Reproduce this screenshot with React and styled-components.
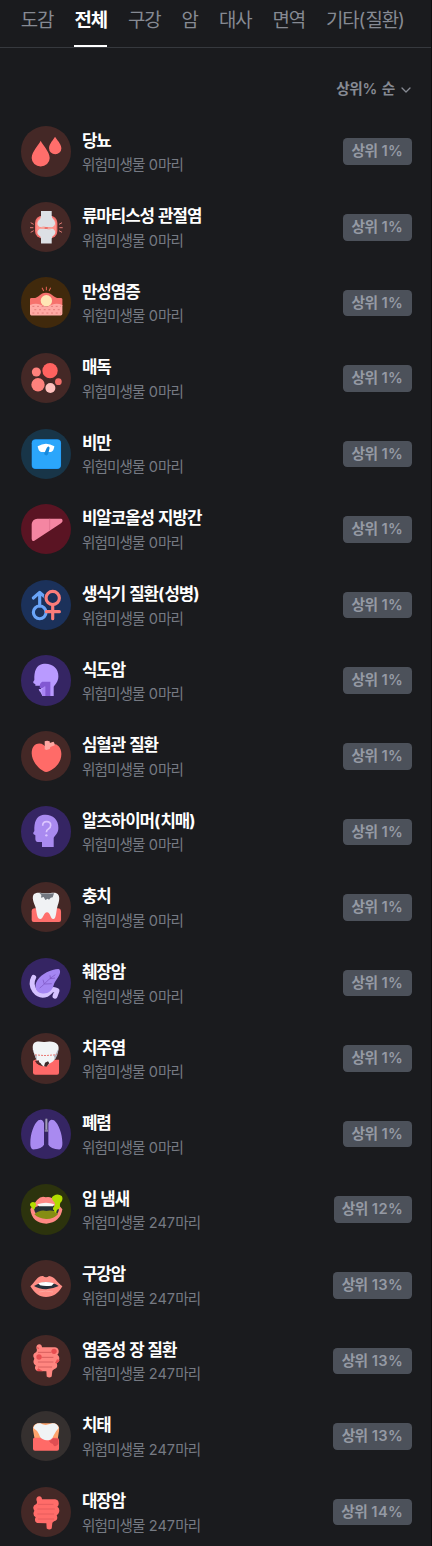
import React from "react";
import styled, { createGlobalStyle, css } from "styled-components";

const GlobalStyle = createGlobalStyle`
  *, *::before, *::after { box-sizing: border-box; }
  body {
    margin: 0;
    background: #1a1b1e;
    font-family: Inter, "Noto Sans CJK KR", sans-serif;
    -webkit-font-smoothing: antialiased;
  }
`;

const Page = styled.div`
  width: 432px;
  height: 1546px;
  overflow: hidden;
  background: #1a1b1e;
  border-right: 1px solid #0e0e10;
`;

const TabBar = styled.nav`
  display: flex;
  gap: 21.1px;
  height: 48px;
  padding-left: 20.8px;
  border-bottom: 1px solid #36393e;
`;

const Tab = styled.div`
  height: 47px;
  padding-top: 7px;
  font-size: 18.9px;
  line-height: 28px;
  white-space: nowrap;
  color: #868a93;
  ${(p) =>
    p.$active &&
    css`
      color: #fff;
      font-weight: 700;
      border-bottom: 2px solid #fff;
    `}
`;

const SortBar = styled.div`
  display: flex;
  justify-content: flex-end;
  padding: 30px 19px 0 0;
  height: 78.2px;
`;

const Hangul = styled.span`
  letter-spacing: -0.06em;
`;

const SortButton = styled.div`
  display: flex;
  align-items: center;
  gap: 5px;
  height: 23px;
  font-size: 14.7px;
  font-weight: 600;
  letter-spacing: 0.03em;
  line-height: 23px;
  color: #868a93;
  ${Hangul} { letter-spacing: -0.025em; }
`;

const List = styled.div`
  display: flex;
  flex-direction: column;
  gap: 25.2px;
  padding: 0 19.5px 0 21px;
`;

const Row = styled.div`
  display: flex;
  align-items: center;
  height: 50.4px;
  flex-shrink: 0;
`;

const Avatar = styled.div`
  width: 50.4px;
  height: 50.4px;
  border-radius: 50%;
  overflow: hidden;
  background: ${(p) => p.$tone};
  svg { display: block; width: 100%; height: 100%; }
`;

const Info = styled.div`
  flex: 1;
  padding: 2px 0 0 10.5px;
`;

const Name = styled.div`
  font-size: 16.8px;
  font-weight: 700;
  line-height: 25.2px;
  color: #fff;
`;

const Sub = styled.div`
  margin-top: 0.4px;
  font-size: 14.6px;
  line-height: 22px;
  color: #767a83;
`;

const Badge = styled.div`
  height: 26.6px;
  margin-top: 0.6px;
  padding: 0 8.2px;
  border-radius: 4.2px;
  background: #4c515a;
  color: #959aa4;
  font-size: 14.7px;
  font-weight: 600;
  letter-spacing: 0.03em;
  line-height: 27px;
  white-space: nowrap;
  ${Hangul} { letter-spacing: -0.04em; }
`;

/* Hangul is tracked tighter than digits and punctuation. */
const Text = ({ children }) =>
  children
    .split(/([가-힣]+)/)
    .filter(Boolean)
    .map((run, i) => (/[가-힣]/.test(run) ? <Hangul key={i}>{run}</Hangul> : run));

const HEAD =
  "M64 27 C90 22 113 38 112 66 C112 80 103 88 98 95 L98 123 L63 123 L63 108 L50 108 Q43 107 43 98 L43 88 L37 84 Q35 81 40 75 C39 48 46 31 64 27 Z";
const GUT =
  "M46 39 Q46 28 55 28 Q62 28 63 37 L102 37 Q114 39 113 51 Q113 56 109 59 Q117 64 114 76 Q112 82 107 85 Q113 98 99 103 L94 107 L92 124 Q85 130 77 124 L76 109 L48 108 Q38 102 44 91 Q33 84 40 71 Q31 57 46 51 Q50 46 46 39 Z";

const icons = {
  drops: (
    <g fill="#ff6e6b">
      <path d="M59 44 C55 55 32 76 32 96 A27 25 0 0 0 86 96 C86 76 63 55 59 44Z" />
      <path d="M102 32 C98 40 84 53 84 67 A18.5 18 0 0 0 121 67 C121 53 106 40 102 32Z" />
    </g>
  ),
  joint: (
    <>
      <rect x="42" y="41" width="67" height="68" rx="22" fill="#f4706d" />
      <rect x="46" y="45" width="59" height="60" rx="20" fill="#ff918a" />
      <path d="M29 62l9 5M27 77h10M29 91l9-5M123 62l-9 5M125 77h-10M123 91l-9-5" stroke="#ed817a" strokeWidth="2.8" />
      <path d="M60 27H92V41Q92 49 100 56Q106 68 95 75H56Q45 68 52 56Q60 50 60 41Z" fill="#dde0e5" />
      <path d="M56 80H96Q107 88 100 98Q92 102 92 110V124H60V110Q60 102 52 98Q45 88 56 80Z" fill="#dde0e5" />
      <path d="M60 78q8-4 16 0t17-1" fill="none" stroke="#f5a69d" strokeWidth="5" />
      <path d="M71 78h9" stroke="#e4615d" strokeWidth="4" />
    </>
  ),
  inflammation: (
    <>
      <path d="M27 66Q27 62 34 63C54 65 55 47 75 47S97 65 117 63Q124 62 124 67V87H27Z" fill="#f6716c" />
      <path d="M27 84Q43 77 59 83Q75 93 92 83Q108 77 124 84V110Q124 115 119 115H31Q27 115 27 110Z" fill="#ffaaa5" />
      <path d="M34 88h86M40 98h77M34 108h86" stroke="#df7775" strokeWidth="2.6" strokeDasharray="6 8" />
      <circle cx="76" cy="71" r="17" fill="#ffe6b5" />
      <path d="M63 32l5 10M76 29v11M89 32l-5 10" stroke="#e96356" strokeWidth="3" />
    </>
  ),
  cells: (
    <>
      <circle cx="87" cy="53" r="23" fill="#ff625f" />
      <circle cx="46" cy="57" r="13.5" fill="#ff817c" />
      <circle cx="51" cy="95" r="20" fill="#ff817c" />
      <circle cx="88" cy="105" r="15" fill="#ffc0bd" />
      <circle cx="112" cy="86" r="10" fill="#f16d69" />
    </>
  ),
  scale: (
    <>
      <rect x="32" y="31" width="88" height="89" rx="12" fill="#1c8ff0" />
      <rect x="33" y="32" width="86" height="86" rx="11" fill="#2ba6fb" />
      <path d="M50 52Q75 36 100 52Q98 67 90 69H60Q52 67 50 52Z" fill="#fff" />
      <path d="M69 75L77 57Q80 51 84 53Q87 55 85 61L81 76Q76 83 69 75Z" fill="#1689dc" />
    </>
  ),
  liver: (
    <>
      <path d="M32 60Q34 45 49 44H120Q126 45 124 53Q121 58 113 62L40 110Q32 113 32 104Z" fill="#f486a2" />
      <path d="M86 44V79" stroke="#d66a87" strokeWidth="2" />
    </>
  ),
  genders: (
    <>
      <g fill="none" stroke="#6aa4f8" strokeWidth="9.5">
        <circle cx="56" cy="97" r="19" />
        <path d="M56 78V39M37 54L56 37L75 54" strokeLinecap="round" strokeLinejoin="round" />
      </g>
      <circle cx="95" cy="54" r="20" fill="none" stroke="#1b315a" strokeWidth="14" />
      <g fill="none" stroke="#fb7d7a" strokeWidth="9.5" strokeLinecap="round">
        <circle cx="95" cy="54" r="20" />
        <path d="M95 75V116M76 95H115" />
      </g>
    </>
  ),
  throat: (
    <>
      <path d="M64 27C90 22 113 38 112 64C112 80 103 88 98 95L98 123H64L58 111Q54 109 53 102H60V92H43V88L37 84Q35 81 40 75C39 48 46 31 64 27Z" fill="#b99aff" />
      <path d="M57 87L63 80H88V123H72V94Q62 103 56 98Z" fill="#8258d2" />
      <path d="M62 104L73 94V123H64Z" fill="#a985f5" />
    </>
  ),
  heart: (
    <>
      <path d="M77 54C69 31 32 30 32 67C33 98 62 120 75 123C94 120 121 99 121 69C121 34 86 30 77 54Z" fill="#ff6b68" />
      <path d="M71 55V31Q79 27 87 32L86 36L97 32Q101 34 101 43L88 48L86 54L76 57Z" fill="#ffa7a2" />
    </>
  ),
  mind: (
    <>
      <path d={HEAD} fill="#a98af0" />
      <path d="M65 59Q65 47 77 47Q89 47 89 58Q89 65 82 69Q76 72 76 79" fill="none" stroke="#dbc5ff" strokeWidth="5" />
      <circle cx="76" cy="88" r="3.5" fill="#dbc5ff" />
    </>
  ),
  cavity: (
    <>
      <path d="M32 88Q32 79 42 79H110Q120 79 120 89V114Q120 120 114 120H38Q32 120 32 114Z" fill="#ff6f6c" />
      <path d="M39 36C50 29 59 34 75 34S102 28 110 36C119 45 113 62 109 74C105 87 106 110 97 111C88 112 88 91 78 91S67 112 57 111C46 109 48 87 43 74C38 62 31 46 39 36Z" fill="#f0f2f4" />
      <path d="M55 33L61 39L60 47L68 45L73 54L80 50L84 53L89 47L95 46L99 34Q77 36 55 33Z" fill="#727780" />
    </>
  ),
  pancreas: (
    <>
      <path d="M38 58Q27 78 41 98Q56 117 77 109Q83 105 88 100Q96 90 108 98L102 114" fill="none" stroke="#d5c2ff" strokeWidth="15" strokeLinecap="round" strokeLinejoin="round" />
      <path d="M112 33C91 34 61 47 49 67C38 84 44 104 61 106C81 109 93 99 98 81C103 65 119 52 117 39Q116 33 112 33Z" fill="#a586f3" />
      <path d="M56 90C73 77 78 66 103 50M70 79L66 65M72 78L92 77M88 61L87 52M87 62L102 60" fill="none" stroke="#7851bd" strokeWidth="2" />
    </>
  ),
  gum: (
    <>
      <path d="M36 83L47 78L52 95L65 100L79 90L101 80L114 80V119Q114 125 108 125H43Q36 125 36 119Z" fill="#ff6968" />
      <path d="M39 30C51 22 61 28 71 27C84 24 103 24 110 35C116 45 111 54 107 65C103 79 99 84 85 92C73 105 64 101 59 91L48 85C43 68 28 43 39 30Z" fill="#f2f4f6" />
      <path d="M34 45Q37 64 47 67V83L56 90L48 88Q43 70 34 45ZM103 65L112 47Q112 66 100 81Q102 72 98 68Z" fill="#aeb4c0" />
      <path d="M42 65Q75 70 107 64" fill="none" stroke="#e97975" strokeWidth="3" strokeDasharray="6 3" />
      <path d="M69 100L72 89L81 85L85 91L76 101Z" fill="#3d2828" />
      <path d="M42 84L53 82L56 94L48 93Z" fill="#532b2b" />
    </>
  ),
  lungs: (
    <>
      <path d="M52 34Q65 28 69 43V107Q63 119 36 121Q27 119 28 101C28 76 38 45 52 34Z" fill="#a98af0" />
      <path d="M99 34Q86 28 82 43V107Q88 119 115 121Q125 119 124 101C124 76 113 45 99 34Z" fill="#a98af0" />
      <path d="M76 29V61M71 65h10" fill="none" stroke="#85809b" strokeWidth="7" />
      <path d="M76 29V62" stroke="#b5b0c8" strokeWidth="2" />
    </>
  ),
  odor: (
    <>
      <path d="M28 75L48 48Q61 34 74 40Q89 35 103 51L124 76Q118 115 76 119Q32 117 28 75Z" fill="#ff8984" />
      <path d="M38 72Q58 61 74 60Q98 61 114 73Q112 102 75 103Q42 101 38 72Z" fill="#263035" />
      <path d="M49 61Q75 52 100 61L96 67H54Z" fill="#f8f6f3" />
      <path d="M40 91Q57 76 76 81Q99 76 111 90Q99 105 76 105Q52 104 40 91Z" fill="#858d13" />
      <path d="M27 64Q26 56 35 54Q46 54 45 63L41 74Q37 81 34 73ZM96 50Q88 40 98 35Q111 27 122 36Q127 44 121 53Q115 57 117 69Q115 77 108 77L105 86Q99 87 99 79Q93 76 98 68Q107 60 96 50Z" fill="#b3dc00" />
    </>
  ),
  mouth: (
    <>
      <path d="M28 79C44 65 48 47 66 48Q75 55 84 48C101 49 107 67 124 79C110 102 96 111 75 111S42 101 28 79Z" fill="#ff8e86" />
      <path d="M39 78Q62 66 76 67Q96 67 113 78Q94 87 75 88Q52 87 39 78Z" fill="#28303a" />
      <path d="M52 70Q74 62 99 70L92 77Q72 80 57 76Z" fill="#fff" />
      <path d="M54 96q19-6 42 0" fill="none" stroke="#ffb0a8" strokeWidth="2" />
    </>
  ),
  inflamedGut: (
    <>
      <path d={GUT} fill="#ff8680" />
      <path d="M52 52H90M62 67H96M52 81H96M52 96H92" stroke="#c95252" strokeWidth="2.2" strokeLinecap="round" />
      <g fill="#e84e51">
        <circle cx="99" cy="49" r="8" />
        <circle cx="54" cy="66" r="8" />
        <path d="M108 73L116 75Q112 86 102 84ZM52 100L66 109H49Q46 104 52 100ZM47 36L55 39L51 43Z" />
      </g>
    </>
  ),
  plaque: (
    <>
      <path d="M36 57Q34 41 49 37H101Q117 43 114 59L109 91H42Z" fill="#ffa46d" />
      <path d="M36 84Q35 81 41 80H109Q114 81 114 89V113Q114 119 108 119H42Q36 119 36 113Z" fill="#ff6a67" />
      <path d="M37 51Q41 36 58 37Q68 43 75 42Q82 40 94 37Q109 36 113 51Q104 60 98 73Q96 82 88 86Q75 90 66 85Q57 82 54 70Q49 58 37 51Z" fill="#f0f3f5" />
      <path d="M84 90Q93 87 97 82L112 83V99Q107 107 99 105L95 98Q89 99 84 90Z" fill="#df4e52" />
    </>
  ),
  gut: (
    <>
      <path d={GUT} fill="#ff6c69" />
      <path d="M52 52H96M50 66H100M50 81H98M52 96H98" stroke="#d95556" strokeWidth="2" strokeLinecap="round" />
    </>
  ),
};

const conditions = [
  ["당뇨", "drops", "#442826", 0, 1],
  ["류마티스성 관절염", "joint", "#442826", 0, 1],
  ["만성염증", "inflammation", "#40290c", 0, 1],
  ["매독", "cells", "#442826", 0, 1],
  ["비만", "scale", "#183548", 0, 1],
  ["비알코올성 지방간", "liver", "#5a1423", 0, 1],
  ["생식기 질환(성병)", "genders", "#1b315a", 0, 1],
  ["식도암", "throat", "#352563", 0, 1],
  ["심혈관 질환", "heart", "#442826", 0, 1],
  ["알츠하이머(치매)", "mind", "#352563", 0, 1],
  ["충치", "cavity", "#442826", 0, 1],
  ["췌장암", "pancreas", "#352563", 0, 1],
  ["치주염", "gum", "#442826", 0, 1],
  ["폐렴", "lungs", "#352563", 0, 1],
  ["입 냄새", "odor", "#2c330d", 247, 12],
  ["구강암", "mouth", "#442826", 247, 13],
  ["염증성 장 질환", "inflamedGut", "#442826", 247, 13],
  ["치태", "plaque", "#35302f", 247, 13],
  ["대장암", "gut", "#442826", 247, 14],
];

const tabs = ["도감", "전체", "구강", "암", "대사", "면역", "기타(질환)"];

export default function App() {
  return (
    <Page>
      <GlobalStyle />
      <TabBar>
        {tabs.map((t) => (
          <Tab key={t} $active={t === "전체"}>
            <Text>{t}</Text>
          </Tab>
        ))}
      </TabBar>
      <SortBar>
        <SortButton>
          <span><Text>상위% 순</Text></span>
          <svg width="12" height="12" viewBox="0 0 12 12" fill="none" stroke="currentColor" strokeWidth="1.3" strokeLinecap="round" strokeLinejoin="round">
            <path d="M2 4l4 4 4-4" />
          </svg>
        </SortButton>
      </SortBar>
      <List>
        {conditions.map(([name, icon, tone, count, rank]) => (
          <Row key={name}>
            <Avatar $tone={tone}>
              <svg viewBox="0 0 151 151">{icons[icon]}</svg>
            </Avatar>
            <Info>
              <Name><Text>{name}</Text></Name>
              <Sub><Text>{`위험미생물 ${count}마리`}</Text></Sub>
            </Info>
            <Badge><Text>{`상위 ${rank}%`}</Text></Badge>
          </Row>
        ))}
      </List>
    </Page>
  );
}
